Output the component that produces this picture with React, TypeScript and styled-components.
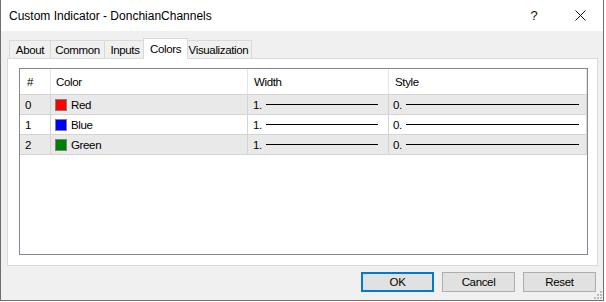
import React from "react";
import styled, { createGlobalStyle } from "styled-components";

const GlobalStyle = createGlobalStyle`
  html, body { margin: 0; padding: 0; background: #ffffff; }
  body { font-family: "Liberation Sans", Arial, sans-serif; }
  * { box-sizing: border-box; }
`;

const Window = styled.div`
  width: 604px;
  height: 301px;
  display: flex;
  flex-direction: column;
  border: 1px solid #6f6f6f;
  border-top: none;
  background: #f0f0f0;
  position: relative;
`;

const TitleBar = styled.div`
  height: 31px;
  background: #ffffff;
  display: flex;
  align-items: center;
  padding-left: 8px;
`;

const Title = styled.div`
  flex: 1;
  font-family: "Liberation Sans", Arial, sans-serif;
  font-size: 12px;
  color: #000;
  line-height: 30px;
`;

const TitleButton = styled.div<{ $w: number }>`
  width: ${(p) => p.$w}px;
  height: 30px;
  display: flex;
  align-items: center;
  justify-content: center;
  font-family: "Liberation Sans", Arial, sans-serif;
  font-size: 13px;
  color: #111;
`;

const Body = styled.div`
  flex: 1;
  display: flex;
  flex-direction: column;
  padding: 7px 7px 0 6px;
  font-size: 11.5px;
  letter-spacing: -0.35px;
`;

const TabStrip = styled.div`
  height: 20px;
  display: flex;
  align-items: flex-end;
  padding-left: 2px;
  position: relative;
  z-index: 2;
`;

const Tab = styled.div<{ $w: number; $active?: boolean }>`
  width: ${(p) => p.$w}px;
  height: ${(p) => (p.$active ? 21 : 18)}px;
  margin-left: ${(p) => (p.$active ? -3 : -1)}px;
  margin-right: ${(p) => (p.$active ? -2 : 0)}px;
  margin-bottom: ${(p) => (p.$active ? -1 : 0)}px;
  border: 1px solid #d9d9d9;
  border-bottom: none;
  background: ${(p) => (p.$active ? "#ffffff" : "#f0f0f0")};
  display: flex;
  align-items: center;
  justify-content: center;
  padding-top: ${(p) => (p.$active ? 0 : 1)}px;
  color: #000;
  white-space: nowrap;
  position: relative;
  z-index: ${(p) => (p.$active ? 3 : 1)};
  &:first-child { margin-left: 0; }
`;

const Panel = styled.div`
  width: 591px;
  height: 208px;
  border: 1px solid #d9d9d9;
  background: #ffffff;
  padding: 9px 9px 10px 11px;
  position: relative;
  z-index: 1;
`;

const ListBox = styled.div`
  width: 569px;
  height: 187px;
  border: 1px solid #828790;
  background: #ffffff;
  display: flex;
  flex-direction: column;
`;

const Row = styled.div<{ $head?: boolean; $alt?: boolean }>`
  display: grid;
  grid-template-columns: 31px 197px 141px 198px;
  height: ${(p) => (p.$head ? 26 : 20)}px;
  border-bottom: 1px solid #d4d4d4;
  background: ${(p) => (p.$alt ? "#e9e9e9" : "#ffffff")};
`;

const Cell = styled.div<{ $head?: boolean; $pad?: number }>`
  display: flex;
  align-items: center;
  padding-left: ${(p) => p.$pad ?? 5}px;
  border-right: 1px solid ${(p) => (p.$head ? "#e5e5e5" : "#d4d4d4")};
  color: #000;
  white-space: nowrap;
  overflow: hidden;
`;

const Swatch = styled.span<{ $c: string }>`
  width: 12px;
  height: 12px;
  border: 1px solid #7f7f7f;
  background: ${(p) => p.$c};
  margin-right: 4px;
  flex: none;
`;

const LineSample = styled.span<{ $right: number }>`
  flex: 1;
  height: 1px;
  background: #000;
  margin-left: 4px;
  margin-right: ${(p) => p.$right}px;
`;

const Footer = styled.div`
  flex: 1;
  display: flex;
  justify-content: flex-end;
  align-items: flex-start;
  gap: 8px;
  padding-top: 6px;
`;

const Button = styled.div<{ $default?: boolean }>`
  width: 73px;
  height: 20px;
  background: #e1e1e1;
  border: ${(p) => (p.$default ? "2px solid #0078d7" : "1px solid #adadad")};
  display: flex;
  align-items: center;
  justify-content: center;
  color: #000;
`;

const Grip = styled.svg`
  position: absolute;
  right: 1px;
  bottom: 1px;
`;

const rows = [
  { n: "0", name: "Red", c: "#ff0000" },
  { n: "1", name: "Blue", c: "#0000ff" },
  { n: "2", name: "Green", c: "#008000" },
];

export default function App() {
  return (
    <>
      <GlobalStyle />
      <Window>
        <TitleBar>
          <Title>Custom Indicator - DonchianChannels</Title>
          <TitleButton $w={46}>?</TitleButton>
          <TitleButton $w={46}>
            <svg width="11" height="11" viewBox="0 0 11 11">
              <path d="M0.5 0.5 L10.5 10.5 M10.5 0.5 L0.5 10.5" stroke="#111" strokeWidth="1" fill="none" />
            </svg>
          </TitleButton>
        </TitleBar>
        <Body>
          <TabStrip>
            <Tab $w={42}>About</Tab>
            <Tab $w={55}>Common</Tab>
            <Tab $w={42}>Inputs</Tab>
            <Tab $w={45} $active>Colors</Tab>
            <Tab $w={67}>Visualization</Tab>
          </TabStrip>
          <Panel>
            <ListBox>
              <Row $head>
                <Cell $head $pad={7}>#</Cell>
                <Cell $head $pad={5}>Color</Cell>
                <Cell $head $pad={6}>Width</Cell>
                <Cell $head $pad={6}>Style</Cell>
              </Row>
              {rows.map((r, i) => (
                <Row key={r.n} $alt={i % 2 === 0}>
                  <Cell>{r.n}</Cell>
                  <Cell $pad={4}>
                    <Swatch $c={r.c} />
                    {r.name}
                  </Cell>
                  <Cell>
                    1.
                    <LineSample $right={10} />
                  </Cell>
                  <Cell $pad={4}>
                    0.
                    <LineSample $right={7} />
                  </Cell>
                </Row>
              ))}
            </ListBox>
          </Panel>
          <Footer>
            <Button $default>OK</Button>
            <Button>Cancel</Button>
            <Button>Reset</Button>
          </Footer>
        </Body>
        <Grip width="8" height="8" viewBox="0 0 8 8">
          <g fill="#bdbdbd">
            <rect x="6" y="0" width="2" height="2" />
            <rect x="3" y="3" width="2" height="2" />
            <rect x="6" y="3" width="2" height="2" />
            <rect x="0" y="6" width="2" height="2" />
            <rect x="3" y="6" width="2" height="2" />
            <rect x="6" y="6" width="2" height="2" />
          </g>
        </Grip>
      </Window>
    </>
  );
}
